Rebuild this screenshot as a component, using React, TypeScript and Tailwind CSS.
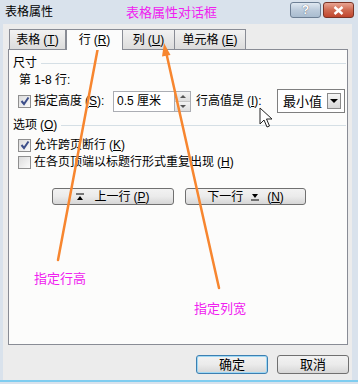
import React from 'react';

const Check = ({ on }: { on?: boolean }) => (
  <span className="w-[13px] h-[13px] border border-[#8f8f8f] bg-gradient-to-br from-[#dcdcdc] to-[#fbfbfb] flex items-center justify-center shrink-0">
    {on && (
      <svg width="10" height="10" viewBox="0 0 10 10">
        <path d="M1.5 5 L4 8 L8.5 1.5" fill="none" stroke="#3d4f8a" strokeWidth="2" />
      </svg>
    )}
  </span>
);

const Key = ({ k }: { k: string }) => (
  <span className="ml-[3px]">
    (<span className="underline">{k}</span>)
  </span>
);

const Btn = ({ children, def, w }: { children: React.ReactNode; def?: boolean; w: string }) => (
  <div
    className={`${w} flex items-center justify-center rounded-[3px] border ${
      def ? 'border-[#3c7fb1] shadow-[inset_0_0_0_1px_#9fd8f4]' : 'border-[#707070]'
    } bg-gradient-to-b from-[#f2f2f2] via-[#ebebeb] to-[#d6d6d6]`}
  >
    {children}
  </div>
);

export default function App() {
  return (
    <div className="relative w-[358px] h-[384px] overflow-hidden bg-[#d9e2ec] text-[12px] leading-none text-black font-['Liberation_Sans','Noto_Sans_CJK_SC',sans-serif]">
      {/* title bar */}
      <div className="h-[24px] flex items-center pl-[5px] pr-[4px]">
        <span className="text-[12px] w-[121px]">表格属性</span>
        <span className="text-[13px] text-[#f020f0]">表格属性对话框</span>
        <div className="ml-auto flex gap-[2px] mt-[-4px]">
          <div className="w-[31px] h-[16px] rounded-[3px] border border-[#6d7f94] bg-gradient-to-b from-[#dfe8f1] via-[#bccbdb] to-[#a9bccf] flex items-center justify-center text-white text-[12px] font-bold [text-shadow:0_0_1px_#334]">
            ?
          </div>
          <div className="w-[31px] h-[16px] rounded-[3px] border border-[#7a3325] bg-gradient-to-b from-[#e8a493] via-[#cf6a51] to-[#c0452d] flex items-center justify-center">
            <svg width="11" height="9" viewBox="0 0 11 9">
              <path d="M1.5 1 L9.5 8 M9.5 1 L1.5 8" stroke="#fff" strokeWidth="2.4" />
            </svg>
          </div>
        </div>
      </div>

      {/* window body */}
      <div className="ml-[3px] w-[349px] h-[356px] bg-[#ececec] flex flex-col">
        {/* tabs */}
        <div className="flex items-end pl-[6px] pt-[5px] h-[25px]">
          <div className="w-[57px] h-[20px] border border-[#898c95] border-b-0 bg-gradient-to-b from-[#f2f2f2] to-[#dcdcdc] flex items-center justify-center">
            表格<Key k="T" />
          </div>
          <div className="w-[57px] h-[21px] border border-[#898c95] border-b-0 bg-[#fcfcfc] flex items-center justify-center relative top-[1px] z-10">
            行<Key k="R" />
          </div>
          <div className="w-[52px] h-[20px] border border-[#898c95] border-b-0 border-l-0 bg-gradient-to-b from-[#f2f2f2] to-[#dcdcdc] flex items-center justify-center">
            列<Key k="U" />
          </div>
          <div className="w-[71px] h-[20px] border border-[#898c95] border-b-0 border-l-0 bg-gradient-to-b from-[#f2f2f2] to-[#dcdcdc] flex items-center justify-center">
            单元格<Key k="E" />
          </div>
        </div>

        {/* panel */}
        <div className="ml-[5px] w-[340px] h-[296px] border border-[#898c95] bg-[#fcfcfb] flex flex-col pl-[4px] pr-[1px]">
          <div className="flex items-center h-[14px] mt-[6px] gap-[4px]">
            <span>尺寸</span>
            <span className="flex-1 h-px bg-[#d5dfe5]" />
          </div>
          <div className="pl-[6px] mt-[4px] h-[12px] flex items-center">第 1-8 行:</div>
          <div className="flex items-center pl-[5px] mt-[3px] h-[24px]">
            <Check on />
            <span className="ml-[3px] w-[79px] shrink-0 whitespace-nowrap">
              指定高度<Key k="S" />:
            </span>
            <div className="w-[62px] h-[21px] shrink-0 border border-[#abadb3] bg-white flex items-center pl-[3px]">0.5 厘米</div>
            <div className="w-[16px] h-[21px] shrink-0 border border-l-0 border-[#abadb3] flex flex-col">
              <div className="flex-1 border-b border-[#c5c5c5] bg-gradient-to-b from-[#f4f4f4] to-[#dedede] flex items-center justify-center">
                <svg width="6" height="3" viewBox="0 0 6 3"><path d="M0 3 L3 0 L6 3Z" fill="#555" /></svg>
              </div>
              <div className="flex-1 bg-gradient-to-b from-[#f4f4f4] to-[#dedede] flex items-center justify-center">
                <svg width="6" height="3" viewBox="0 0 6 3"><path d="M0 0 L3 3 L6 0Z" fill="#555" /></svg>
              </div>
            </div>
            <span className="ml-[5px] w-[81px] shrink-0 whitespace-nowrap">
              行高值是<Key k="I" />:
            </span>
            <div className="w-[68px] h-[24px] shrink-0 border border-[#7f7f7f] bg-white flex items-center pl-[5px] pr-[3px]">
              <span className="text-[13px]">最小值</span>
              <div className="ml-auto w-[14px] h-[16px] border border-[#8a8a8a] bg-gradient-to-b from-[#f6f6f6] to-[#d8d8d8] flex items-center justify-center">
                <svg width="8" height="4" viewBox="0 0 8 4"><path d="M0 0 L4 4 L8 0Z" fill="#000" /></svg>
              </div>
            </div>
          </div>
          <div className="flex items-center h-[14px] mt-[5px] gap-[4px]">
            <span>
              选项<Key k="O" />
            </span>
            <span className="flex-1 h-px bg-[#d5dfe5]" />
          </div>
          <div className="flex items-center pl-[5px] mt-[5px] h-[16px]">
            <Check on />
            <span className="ml-[3px]">
              允许跨页断行<Key k="K" />
            </span>
          </div>
          <div className="flex items-center pl-[5px] mt-[1px] h-[16px]">
            <Check />
            <span className="ml-[3px]">
              在各页顶端以标题行形式重复出现<Key k="H" />
            </span>
          </div>
          <div className="flex pl-[39px] gap-[11px] mt-[18px] h-[17px]">
            <Btn w="w-[122px]">
              <svg width="8" height="8" viewBox="0 0 8 8" className="mr-[10px]">
                <path d="M0 1 H8" stroke="#000" strokeWidth="1" />
                <path d="M1 7 L4 3 L7 7Z" fill="#000" />
              </svg>
              上一行<Key k="P" />
            </Btn>
            <Btn w="w-[121px]">
              下一行
              <svg width="8" height="8" viewBox="0 0 8 8" className="mx-[8px]">
                <path d="M1 1 L4 5 L7 1Z" fill="#000" />
                <path d="M0 7 H8" stroke="#000" strokeWidth="1" />
              </svg>
              (<span className="underline">N</span>)
            </Btn>
          </div>
          <div className="pl-[21px] mt-[67px] h-[13px] text-[13px] text-[#f020f0]">指定行高</div>
          <div className="pl-[181px] mt-[17px] h-[13px] text-[13px] text-[#f020f0]">指定列宽</div>
        </div>

        {/* bottom buttons */}
        <div className="flex justify-end gap-[9px] pr-[3px] mt-[10px] h-[19px]">
          <Btn w="w-[72px]" def>
            <span className="text-[13px]">确定</span>
          </Btn>
          <Btn w="w-[72px]">
            <span className="text-[13px]">取消</span>
          </Btn>
        </div>
      </div>
      <div className="h-[2px] bg-[#7fcdf0]" />

      {/* orange annotation arrows */}
      <svg className="absolute inset-0 pointer-events-none" width="358" height="384" viewBox="0 0 358 384">
        <path d="M58 260 L99 42" stroke="#f7862f" strokeWidth="2.5" strokeLinecap="round" />
        <path d="M101 31 L105.5 44 L96 42.5Z" fill="#f7862f" />
        <path d="M219 288 L166.5 54" stroke="#f7862f" strokeWidth="2.5" strokeLinecap="round" />
        <path d="M164 43 L170.5 55 L162 56.5Z" fill="#f7862f" />
        {/* mouse pointer */}
        <path
          d="M260 108 L260 124 L264 120 L267 127 L269.5 126 L266.5 119 L272 119Z"
          fill="#fff"
          stroke="#222"
          strokeWidth="1"
          strokeLinejoin="round"
        />
      </svg>
    </div>
  );
}
